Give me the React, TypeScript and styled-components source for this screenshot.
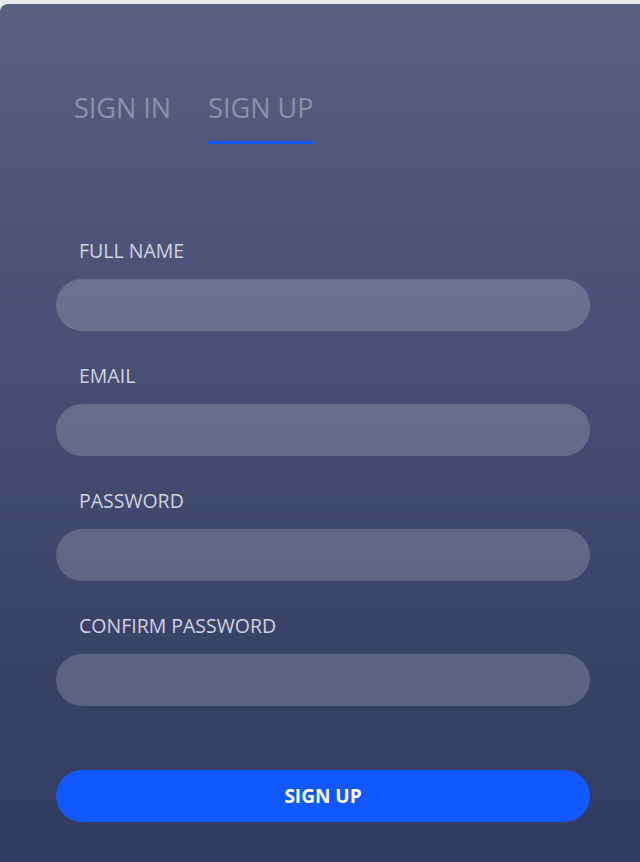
import React from "react";
import styled, { createGlobalStyle } from "styled-components";

const GlobalStyle = createGlobalStyle`
  html, body {
    margin: 0;
    padding: 0;
    background: #e9e9ec;
    font-family: "Open Sans", "Noto Sans", sans-serif;
  }
  * { box-sizing: border-box; }
`;

const Page = styled.div`
  padding-top: 4px;
  width: 640px;
  height: 862px;
  overflow: hidden;
`;

const Card = styled.div`
  width: 700px;
  height: 900px;
  border-top-left-radius: 8px;
  background: linear-gradient(180deg, #5a5f80 0%, #4a5075 35%, #3b4268 70%, #31385e 100%);
  padding: 86px 0 0 56px;
  display: flex;
  flex-direction: column;
`;

const Tabs = styled.div`
  display: flex;
  gap: 37px;
  padding-left: 18px;
`;

const Tab = styled.div<{ $active?: boolean }>`
  font-size: 27px;
  line-height: 36px;
  color: #8c91ab;
  text-transform: uppercase;
  padding-bottom: 15px;
  border-bottom: 3px solid ${(p) => (p.$active ? "#1159ff" : "transparent")};
`;

const Form = styled.form`
  margin-top: 95px;
  display: flex;
  flex-direction: column;
  width: 534px;
`;

const Field = styled.div`
  display: flex;
  flex-direction: column;
  & + & {
    margin-top: 33px;
  }
`;

const Label = styled.label`
  font-size: 19.5px;
  line-height: 24px;
  color: #d0d3e0;
  padding-left: 23px;
  margin-bottom: 16px;
`;

const Input = styled.input`
  height: 52px;
  border: none;
  outline: none;
  border-radius: 26px;
  background: rgba(255, 255, 255, 0.18);
  padding: 0 24px;
  font-family: inherit;
  font-size: 16px;
  color: #fff;
`;

const Button = styled.button`
  margin-top: 64px;
  height: 52px;
  border: none;
  border-radius: 26px;
  background: #1159ff;
  color: #fff;
  font-family: inherit;
  font-weight: 700;
  font-size: 19px;
  text-transform: uppercase;
  cursor: pointer;
`;

const fields = ["Full Name", "Email", "Password", "Confirm Password"];

export default function App() {
  return (
    <Page>
      <GlobalStyle />
      <Card>
        <Tabs>
          <Tab>Sign In</Tab>
          <Tab $active>Sign Up</Tab>
        </Tabs>
        <Form onSubmit={(e) => e.preventDefault()}>
          {fields.map((f) => (
            <Field key={f}>
              <Label>{f.toUpperCase()}</Label>
              <Input type={f.toLowerCase().includes("password") ? "password" : "text"} />
            </Field>
          ))}
          <Button type="submit">Sign Up</Button>
        </Form>
      </Card>
    </Page>
  );
}
